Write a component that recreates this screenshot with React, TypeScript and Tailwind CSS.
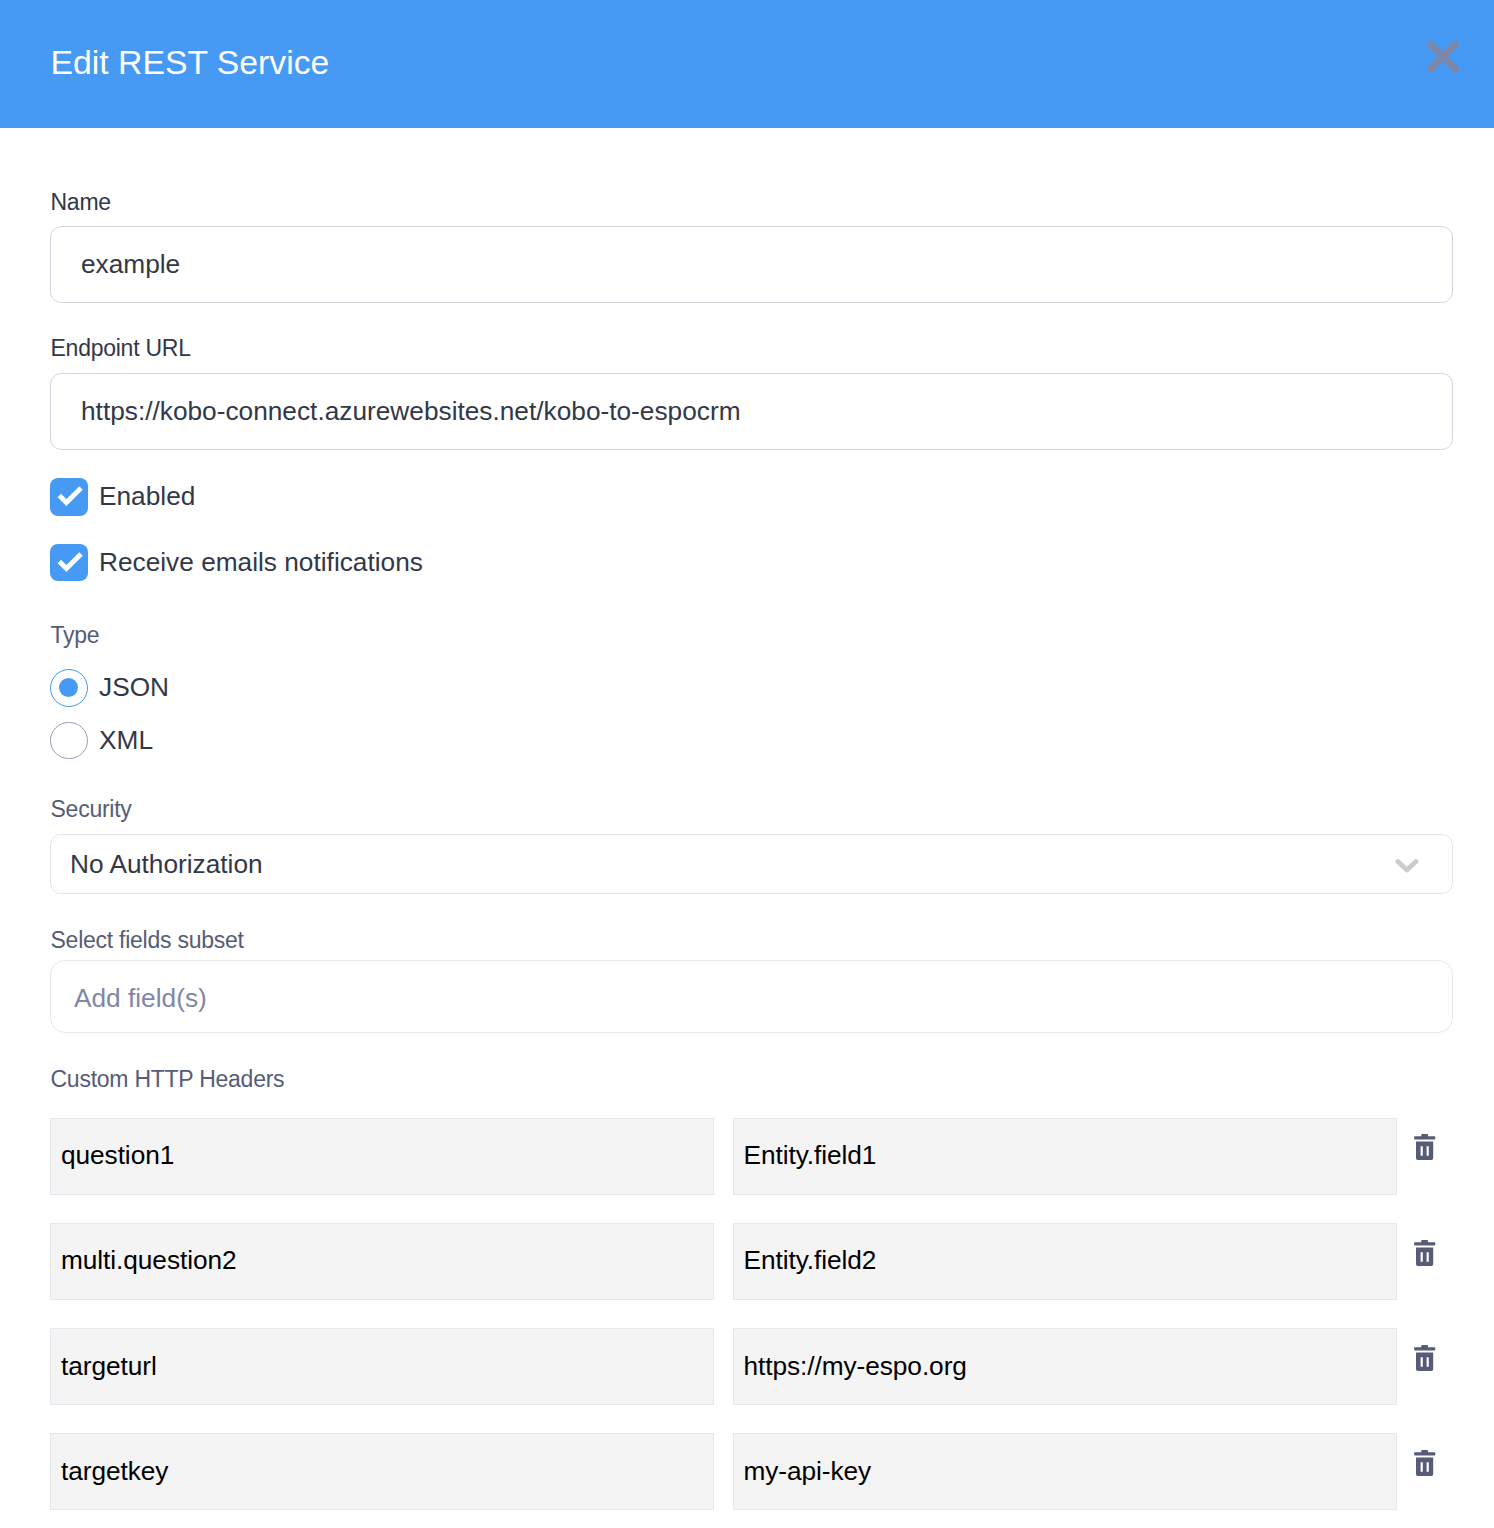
import React from 'react';

const headers = [
  { name: 'question1', value: 'Entity.field1', gap: 'mb-[28px]', trash: 'mt-[16px]', pad: 'pt-[21px]' },
  { name: 'multi.question2', value: 'Entity.field2', gap: 'mb-[28px]', trash: 'mt-[17px]', pad: 'pt-[21px]' },
  { name: 'targeturl', value: 'https://my-espo.org', gap: 'mb-[28px]', trash: 'mt-[17px]', pad: 'pt-[22px]' },
  { name: 'targetkey', value: 'my-api-key', gap: 'mb-0', trash: 'mt-[17px]', pad: 'pt-[22px]' },
];

function Label({ children, className }: { children: React.ReactNode; className: string }) {
  return (
    <div className={`pl-[0.5px] text-[23px] leading-[24px] tracking-[-0.25px] whitespace-nowrap ${className}`}>
      {children}
    </div>
  );
}

function TextBox({ children }: { children: React.ReactNode }) {
  return (
    <div className="h-[77px] rounded-[11px] border border-[#d5d5e0] pl-[30px] pt-[22px] leading-[30px] text-[#333847]">
      {children}
    </div>
  );
}

function Checkbox({ children, size }: { children: React.ReactNode; size: string }) {
  return (
    <div className="flex">
      <div className={`w-[38px] shrink-0 rounded-[8px] bg-[#479af3] ${size}`}>
        <svg width="38" height="37" viewBox="0 0 38 37">
          <path d="M9.3 17.6 L16.4 24.6 L31 10" fill="none" stroke="#fff" strokeWidth="4.9" />
        </svg>
      </div>
      <span className="ml-[11px] mt-[3px] leading-[30px] text-[#333847]">{children}</span>
    </div>
  );
}

function Radio({ children, checked, size }: { children: React.ReactNode; checked?: boolean; size: string }) {
  return (
    <div className="flex">
      <div
        className={`flex w-[38px] shrink-0 items-center justify-center rounded-full border ${size} ${
          checked ? 'border-[#479af3]' : 'border-[#979fb4]'
        }`}
      >
        {checked && <div className="mb-px mr-px h-[19px] w-[19px] rounded-full bg-[#479af3]" />}
      </div>
      <span className="ml-[11px] mt-[3px] leading-[30px] text-[#333847]">{children}</span>
    </div>
  );
}

function Trash() {
  return (
    <svg width="22" height="26" viewBox="0 0 22 26" fill="#565c76">
      <path d="M1 2.3 H7.2 V1 Q7.2 0 8.2 0 H13 Q14 0 14 1 V2.3 H20.5 Q21.3 2.3 21.3 3.1 V4.6 Q21.3 5.4 20.5 5.4 H1 Q0.1 5.4 0.1 4.6 V3.1 Q0.1 2.3 1 2.3 Z" />
      <path
        fillRule="evenodd"
        d="M2 7.6 H19.2 V24.2 Q19.2 26 17.4 26 H3.8 Q2 26 2 24.2 Z M6.6 12.2 V21.7 H8.8 V12.2 Z M12.6 12.2 V21.7 H14.8 V12.2 Z"
      />
    </svg>
  );
}

export default function App() {
  return (
    <div className="h-[1528px] w-[1494px] overflow-hidden bg-white font-['Liberation_Sans',Arial,sans-serif] text-[26.25px]">
      <header className="flex h-[128px] justify-between bg-[#479af3] pl-[50.5px] pr-[34px]">
        <h1 className="mt-[42px] text-[33.75px] leading-[40px] text-white">Edit REST Service</h1>
        <svg className="mt-[40px]" width="34" height="34" viewBox="0 0 34 34">
          <path
            d="M4.6 4.1 L29.4 28.9 M29.4 4.1 L4.6 28.9"
            stroke="#7f87a6"
            strokeWidth="6.8"
            strokeLinecap="round"
          />
        </svg>
      </header>

      <main className="pl-[50px] pr-[41px] pt-[62px]">
        <Label className="mb-[12px] text-[#333847]">Name</Label>
        <TextBox>example</TextBox>

        <Label className="mb-[13px] mt-[33px] text-[#333847]">Endpoint URL</Label>
        <TextBox>https://kobo-connect.azurewebsites.net/kobo-to-espocrm</TextBox>

        <div className="mt-[28px] flex flex-col gap-[28px]">
          <Checkbox size="h-[38px]">Enabled</Checkbox>
          <Checkbox size="h-[37px]">Receive emails notifications</Checkbox>
        </div>

        <Label className="mb-[22px] mt-[42px] text-[#565c76]">Type</Label>
        <div className="flex flex-col gap-[15px]">
          <Radio checked size="h-[38px]">JSON</Radio>
          <Radio size="h-[37px]">XML</Radio>
        </div>

        <Label className="mb-[13px] mt-[38px] text-[#565c76]">Security</Label>
        <div className="flex h-[60px] justify-between rounded-[11px] border border-[#e6e7ee] pl-[19px] pr-[33px]">
          <span className="mt-[14px] leading-[30px] text-[#333847]">No Authorization</span>
          <svg className="mt-[23px]" width="24" height="16" viewBox="0 0 24 16">
            <path d="M2.8 3.6 L11.9 12 L21 3.6" fill="none" stroke="#ccc" strokeWidth="4.8" strokeLinecap="round" strokeLinejoin="round" />
          </svg>
        </div>

        <Label className="mb-[8px] mt-[34px] text-[#565c76]">Select fields subset</Label>
        <div className="h-[73px] rounded-[15px] border border-[#e6e7ee] pl-[23px] pt-[22px] leading-[30px] text-[#7f87a6]">
          Add field(s)
        </div>

        <Label className="mb-[27px] mt-[34px] text-[#565c76]">Custom HTTP Headers</Label>
        {headers.map((h) => (
          <div key={h.name} className={`flex tracking-[-0.07px] ${h.gap}`}>
            <div className={`mr-[19px] h-[77px] w-[664px] border border-[#e6e7ee] bg-[#f4f4f4] pl-[10px] leading-[30px] text-black ${h.pad}`}>
              {h.name}
            </div>
            <div className={`mr-[17px] h-[77px] w-[664px] border border-[#e6e7ee] bg-[#f4f4f4] pl-[9.5px] leading-[30px] text-black ${h.pad}`}>
              {h.value}
            </div>
            <div className={h.trash}>
              <Trash />
            </div>
          </div>
        ))}
      </main>
    </div>
  );
}
